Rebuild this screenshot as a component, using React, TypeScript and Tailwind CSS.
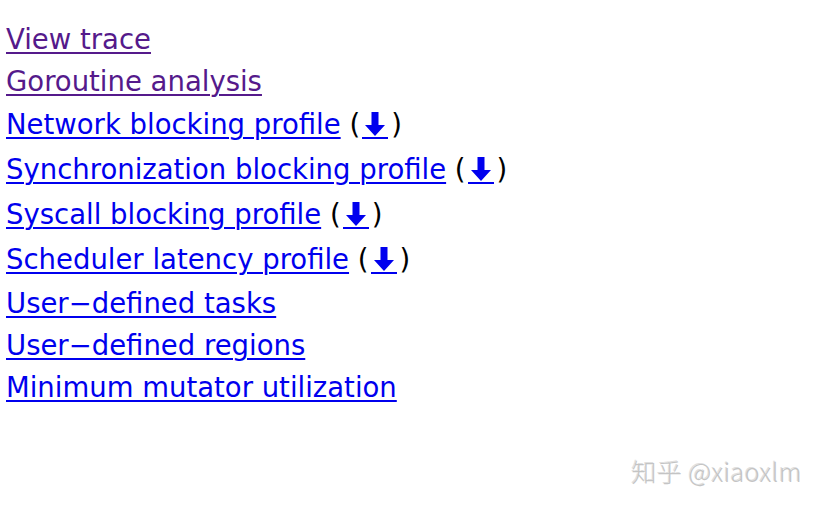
const links = [
  { label: "View trace", visited: true, download: false },
  { label: "Goroutine analysis", visited: true, download: false },
  { label: "Network blocking profile", visited: false, download: true },
  { label: "Synchronization blocking profile", visited: false, download: true },
  { label: "Syscall blocking profile", visited: false, download: true },
  { label: "Scheduler latency profile", visited: false, download: true },
  { label: "User-defined tasks", visited: false, download: false },
  { label: "User-defined regions", visited: false, download: false },
  { label: "Minimum mutator utilization", visited: false, download: false },
]

function DownArrow() {
  return (
    <svg width="22" height="26" viewBox="0 0 22 26" className="block w-[22px] h-[26px]">
      <path d="M7.5 1h7v13h6.5L11 25 1 14h6.5z" fill="#0000ee" />
    </svg>
  )
}

export default function App() {
  return (
    <div className="relative w-[822px] h-[508px] overflow-hidden bg-white text-black font-['DejaVu_Sans',sans-serif] text-[27.5px]">
      <div className="pl-[6px] pt-[18px] flex flex-col">
        {links.map((link) => (
          <div key={link.label} className={link.download ? "leading-[45px]" : "leading-[42px]"}>
            <a
              href="#"
              className={
                "underline decoration-[2px] underline-offset-[3px] " +
                (link.visited ? "text-[#551a8b]" : "text-[#0000ee]")
              }
            >
              {link.label.replace("-", "\u2212")}
            </a>
            {link.download && (
              <>
                {" ("}
                <a href="#" className="inline-block align-[-5px] ml-[2px] mr-[3px] px-[2px] border-b-2 border-[#0000ee]">
                  <DownArrow />
                </a>
                {")"}
              </>
            )}
          </div>
        ))}
      </div>
      <div className="absolute right-[20px] bottom-[18px] text-[25px] tracking-[0.5px] text-[#c4c4c4] font-light font-['Noto_Sans_CJK_SC',sans-serif] [text-shadow:1px_1px_0_#ffffff,-1px_-1px_0_#e0e0e0]">
        知乎 @xiaoxlm
      </div>
    </div>
  )
}
